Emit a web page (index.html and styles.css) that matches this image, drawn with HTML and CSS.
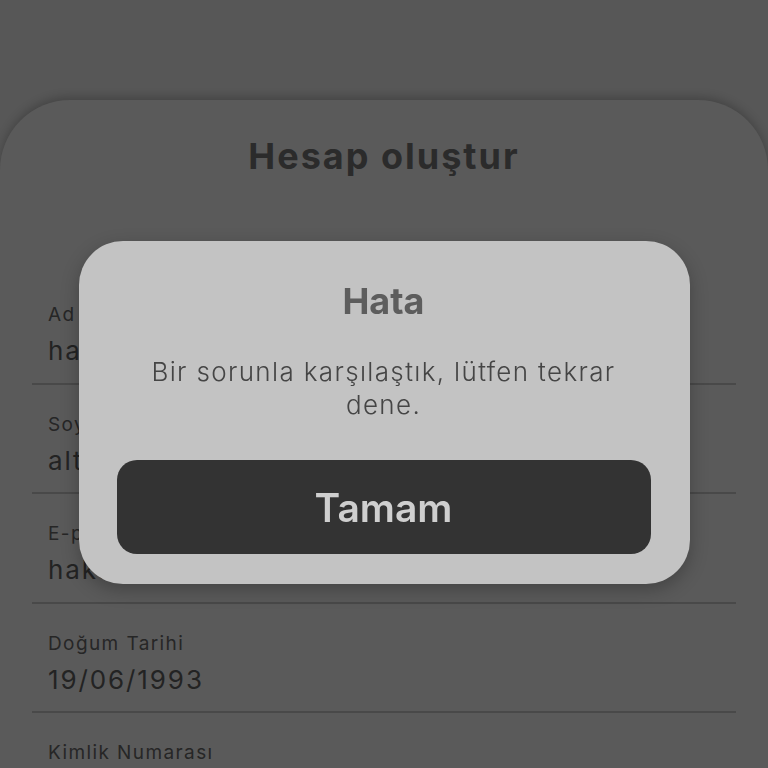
FILE: index.html
```html
<!DOCTYPE html>
<html lang="tr">
<head>
<meta charset="utf-8">
<title>Hesap oluştur</title>
<link rel="stylesheet" href="styles.css">
</head>
<body>
<main class="screen">
  <section class="card">
    <h1 class="card-title">Hesap oluştur</h1>
    <div class="fields">
      <div class="field">
        <div class="field-label">Ad</div>
        <div class="field-value">hakan</div>
      </div>
      <div class="field">
        <div class="field-label">Soyad</div>
        <div class="field-value">altun</div>
      </div>
      <div class="field">
        <div class="field-label">E-posta</div>
        <div class="field-value">hakan@example.com</div>
      </div>
      <div class="field">
        <div class="field-label">Doğum Tarihi</div>
        <div class="field-value">19/06/1993</div>
      </div>
      <div class="field field-last">
        <div class="field-label">Kimlik Numarası</div>
      </div>
    </div>
  </section>
</main>
<div class="overlay">
  <div class="dialog" role="alertdialog">
    <h2 class="dialog-title">Hata</h2>
    <p class="dialog-message">Bir sorunla karşılaştık, lütfen tekrar dene.</p>
    <button class="dialog-button" type="button">Tamam</button>
  </div>
</div>
</body>
</html>
```
FILE: styles.css
```css
* { box-sizing: border-box; }
html, body {
  margin: 0;
  height: 100%;
}
body {
  background: #575757;
  font-family: Inter, "Liberation Sans", sans-serif;
  overflow: hidden;
}
.screen {
  padding-top: 100px;
  height: 768px;
  overflow: hidden;
}
.card {
  background: #5a5a5a;
  border-radius: 70px 70px 0 0;
  box-shadow: 0 -3px 10px rgba(0, 0, 0, 0.22);
  height: 668px;
  padding: 0 32px;
}
.card-title {
  margin: 0;
  padding-top: 34px;
  font-size: 36px;
  line-height: 44px;
  font-weight: 700;
  letter-spacing: 2px;
  color: #2b2b2b;
  text-align: center;
}
.fields {
  padding-top: 97px;
}
.field {
  padding: 28px 16px 14.5px;
  border-bottom: 2px solid #494949;
}
.field-last {
  border-bottom: none;
}
.field-label {
  font-size: 19px;
  line-height: 24px;
  letter-spacing: 1.4px;
  color: #262626;
}
.field-value {
  margin-top: 7px;
  font-size: 26px;
  line-height: 34px;
  letter-spacing: 1.9px;
  color: #232323;
}
.overlay {
  position: fixed;
  inset: 0;
  display: flex;
  justify-content: center;
  align-items: flex-start;
  padding-top: 241px;
}
.dialog {
  width: 611px;
  background: #c3c3c3;
  border-radius: 44px;
  box-shadow: 0 6px 18px rgba(0, 0, 0, 0.25);
  padding: 38px 39px 30px 38px;
  display: flex;
  flex-direction: column;
  align-items: stretch;
  text-align: center;
}
.dialog-title {
  margin: 0;
  font-size: 36px;
  line-height: 44px;
  font-weight: 700;
  color: #5d5d5d;
}
.dialog-message {
  margin: 32px 0 0;
  padding: 0 20px;
  font-size: 26px;
  line-height: 33px;
  font-weight: 300;
  letter-spacing: 1.35px;
  color: #454545;
}
.dialog-button {
  margin-top: 39px;
  height: 94px;
  border: none;
  border-radius: 20px;
  background: #333333;
  color: #cfcfcf;
  font-family: inherit;
  font-size: 39px;
  font-weight: 600;
  display: flex;
  align-items: center;
  justify-content: center;
}
```
